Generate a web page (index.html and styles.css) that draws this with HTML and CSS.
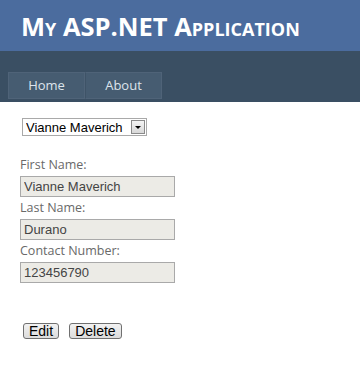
FILE: index.html
```html
<!DOCTYPE html>
<html lang="en">
<head>
    <meta charset="UTF-8">
    <title>My ASP.NET Application</title>
    <link rel="stylesheet" href="styles.css">
</head>
<body>
    <div class="page">
        <div class="header">
            <h1 class="title">My ASP.NET Application</h1>
        </div>
        <div class="nav-bar">
            <ul class="menu">
                <li><a href="#">Home</a></li>
                <li><a href="#">About</a></li>
            </ul>
        </div>
        <div class="main">
            <div class="select-wrap">
                <select class="person-select">
                    <option>Vianne Maverich</option>
                </select>
                <span class="select-arrow"></span>
            </div>

            <div class="fields">
                <label class="field-label">First Name:</label>
                <input class="field-input" type="text" value="Vianne Maverich" readonly>
                <label class="field-label">Last Name:</label>
                <input class="field-input" type="text" value="Durano" readonly>
                <label class="field-label">Contact Number:</label>
                <input class="field-input" type="text" value="123456790" readonly>
            </div>

            <div class="actions">
                <button class="btn" type="button">Edit</button>
                <button class="btn" type="button">Delete</button>
            </div>
        </div>
    </div>
</body>
</html>
```

FILE: styles.css
```css
body {
    margin: 0;
    background: #fff;
    font-family: "Open Sans", Arial, sans-serif;
    font-size: 12.5px;
    color: #696969;
}
.header {
    background: #4b6c9e;
    height: 51px;
    padding-left: 21px;
    display: flex;
    align-items: center;
}
.title {
    margin: 0;
    color: #fff;
    font-family: "Open Sans", sans-serif;
    font-size: 25.5px;
    font-weight: bold;
    font-variant: small-caps;
}
.nav-bar {
    background: #3a4f63;
    height: 51px;
    padding: 21px 0 0 8px;
    box-sizing: border-box;
}
.menu {
    list-style: none;
    margin: 0;
    padding: 0;
    display: flex;
}
.menu li a {
    display: block;
    width: 75px;
    height: 25px;
    line-height: 25px;
    text-align: center;
    background: #465c71;
    border: 1px solid #4f6378;
    color: #dde4ec;
    text-decoration: none;
    font-size: 13px;
}
.menu li + li a {
    border-left: 1px solid #3e5367;
}
.main {
    padding: 16px 0 0 22px;
}
.select-wrap {
    position: relative;
    width: 125px;
    height: 18px;
}
.person-select {
    appearance: none;
    -webkit-appearance: none;
    width: 125px;
    height: 18px;
    box-sizing: border-box;
    margin: 0;
    padding: 0 0 0 3px;
    font-family: Arial, sans-serif;
    font-size: 13px;
    color: #000;
    border: 1px solid #a9a9a9;
    border-radius: 0;
    background: #fff;
}
/* classic dropdown button drawn over the right end of the select */
.select-arrow {
    position: absolute;
    top: 2px;
    right: 2px;
    width: 14px;
    height: 14px;
    box-sizing: border-box;
    border: 1px solid #8a8a8a;
    background: linear-gradient(#f4f4f4, #d8d8d8);
    pointer-events: none;
}
.select-arrow::after {
    content: "";
    position: absolute;
    left: 3px;
    top: 5px;
    border-left: 3px solid transparent;
    border-right: 3px solid transparent;
    border-top: 3px solid #000;
}
.fields {
    display: flex;
    flex-direction: column;
    align-items: flex-start;
    margin-top: 20px;
    margin-left: -2px;
}
.field-label {
    line-height: 18px;
}
.field-input {
    width: 155px;
    height: 21px;
    box-sizing: border-box;
    margin: 2px 0 2px;
    padding: 0 3px;
    border: 1px solid #a9a9a9;
    background: #ecebe6;
    color: #444;
    font-family: Arial, sans-serif;
    font-size: 13px;
}
.actions {
    margin-top: 38px;
    display: flex;
    gap: 10px;
    padding-left: 1px;
}
.btn {
    height: 16px;
    padding: 0 5px;
    border: 1px solid #707070;
    border-radius: 3px;
    background: linear-gradient(#f2f2f2, #dcdcdc);
    color: #000;
    font-family: Arial, sans-serif;
    font-size: 14px;
    line-height: 14px;
}
```
